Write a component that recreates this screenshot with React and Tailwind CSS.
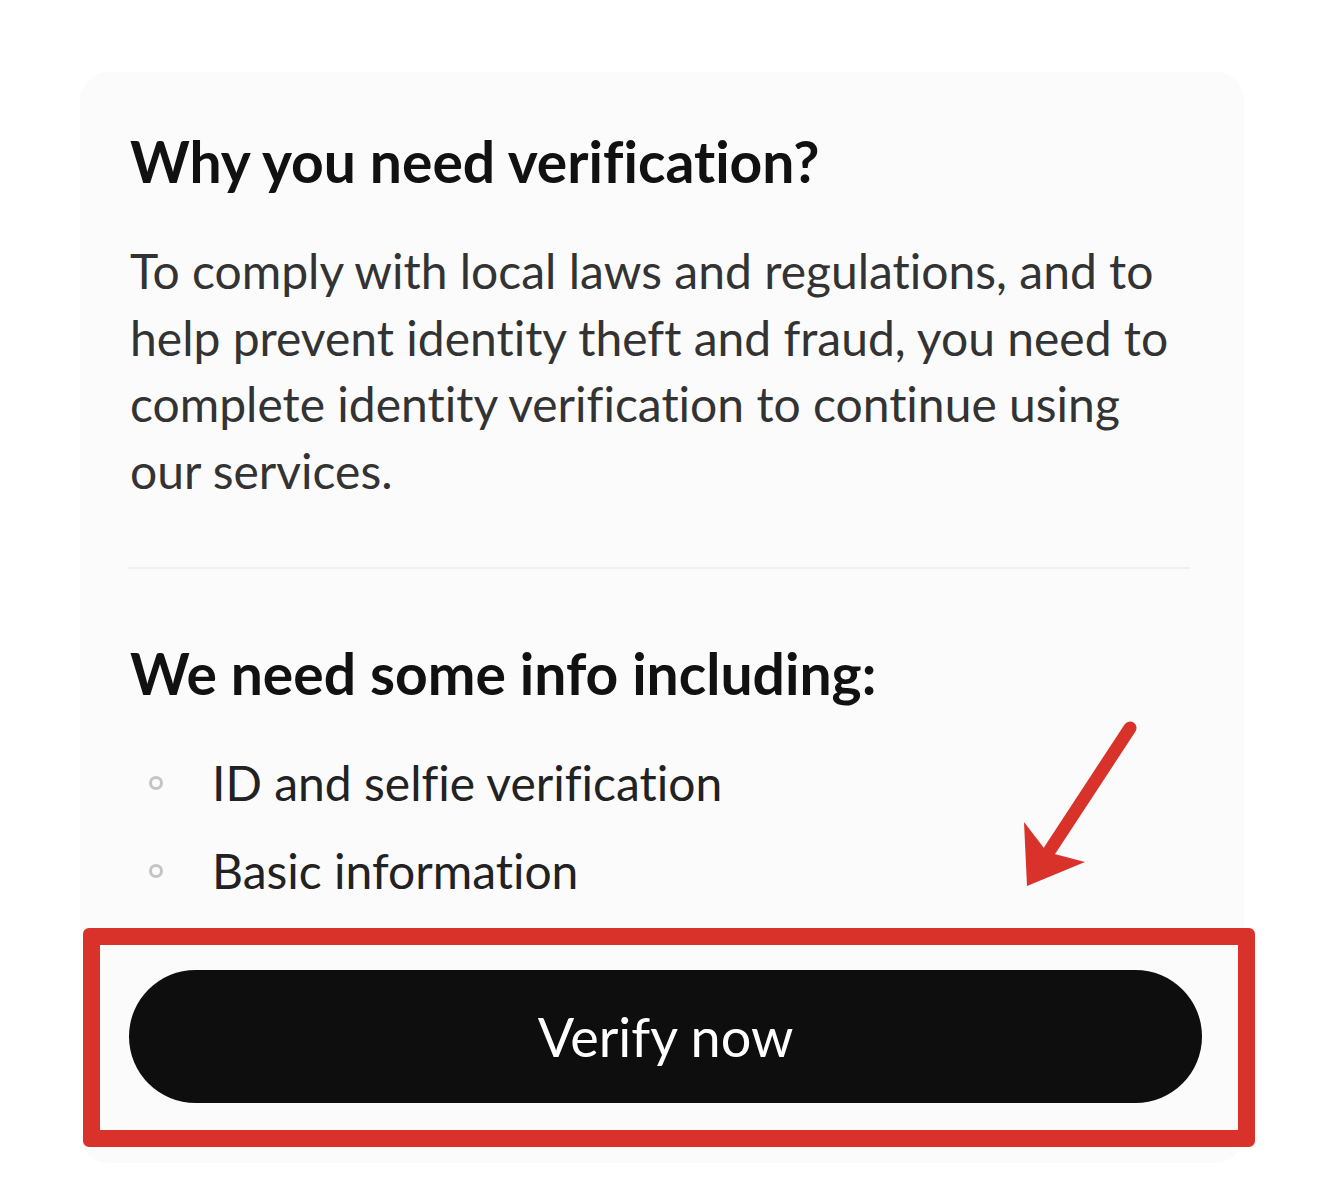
export default function App() {
  return (
    <div
      className="relative min-h-[1201px] bg-white pt-[72px] pl-[80px] [font-variant-ligatures:none]"
      style={{ fontFamily: "Lato, 'Open Sans', sans-serif" }}
    >
      <div className="w-[1164px] rounded-[28px] bg-[#fbfbfb] pl-[50px] pr-[40px] pt-[56px] pb-[60px]">
        <h1 className="text-[57px] leading-[66px] font-bold text-[#111111]">
          Why you need verification?
        </h1>
        <p className="mt-[44px] text-[48px] leading-[66.7px] text-[#333333] whitespace-nowrap">
          <span className="block">To comply with local laws and regulations, and to</span>
          <span className="block">help prevent identity theft and fraud, you need to</span>
          <span className="block">complete identity verification to continue using</span>
          <span className="block">our services.</span>
        </p>
        <div className="mt-[62px] h-[2px] w-[1062px] -ml-[2px] bg-[#f0f0f0]" />
        <h2 className="mt-[71px] text-[57px] leading-[66px] font-bold text-[#111111]">
          We need some info including:
        </h2>
        <ul className="mt-[44px] flex flex-col gap-[21.3px]">
          {["ID and selfie verification", "Basic information"].map((t) => (
            <li key={t} className="flex items-center text-[48px] leading-[66.7px] text-[#222222]">
              <span className="ml-[19px] mr-[49px] h-[14px] w-[14px] shrink-0 rounded-full border-[3px] border-[#c4c4c4]" />
              {t}
            </li>
          ))}
        </ul>
        <div className="relative mt-[65px] w-[1073px] -ml-[1px]">
          <button className="flex h-[133px] w-full items-center justify-center rounded-full bg-[#0e0e0e] text-[54px] text-white">
            Verify now
          </button>
          <div className="pointer-events-none absolute -left-[46px] -top-[42px] -right-[53px] -bottom-[44px] rounded-[6px] border-[17px] border-[#d8322a]" />
        </div>
      </div>
      <svg
        className="pointer-events-none absolute left-[1000px] top-[700px]"
        width="150"
        height="200"
        viewBox="0 0 150 200"
      >
        <line x1="130" y1="28" x2="50" y2="150" stroke="#d8322a" strokeWidth="13" strokeLinecap="round" />
        <polygon points="27,186 24,122 47,152 85,162" fill="#d8322a" />
      </svg>
    </div>
  );
}
